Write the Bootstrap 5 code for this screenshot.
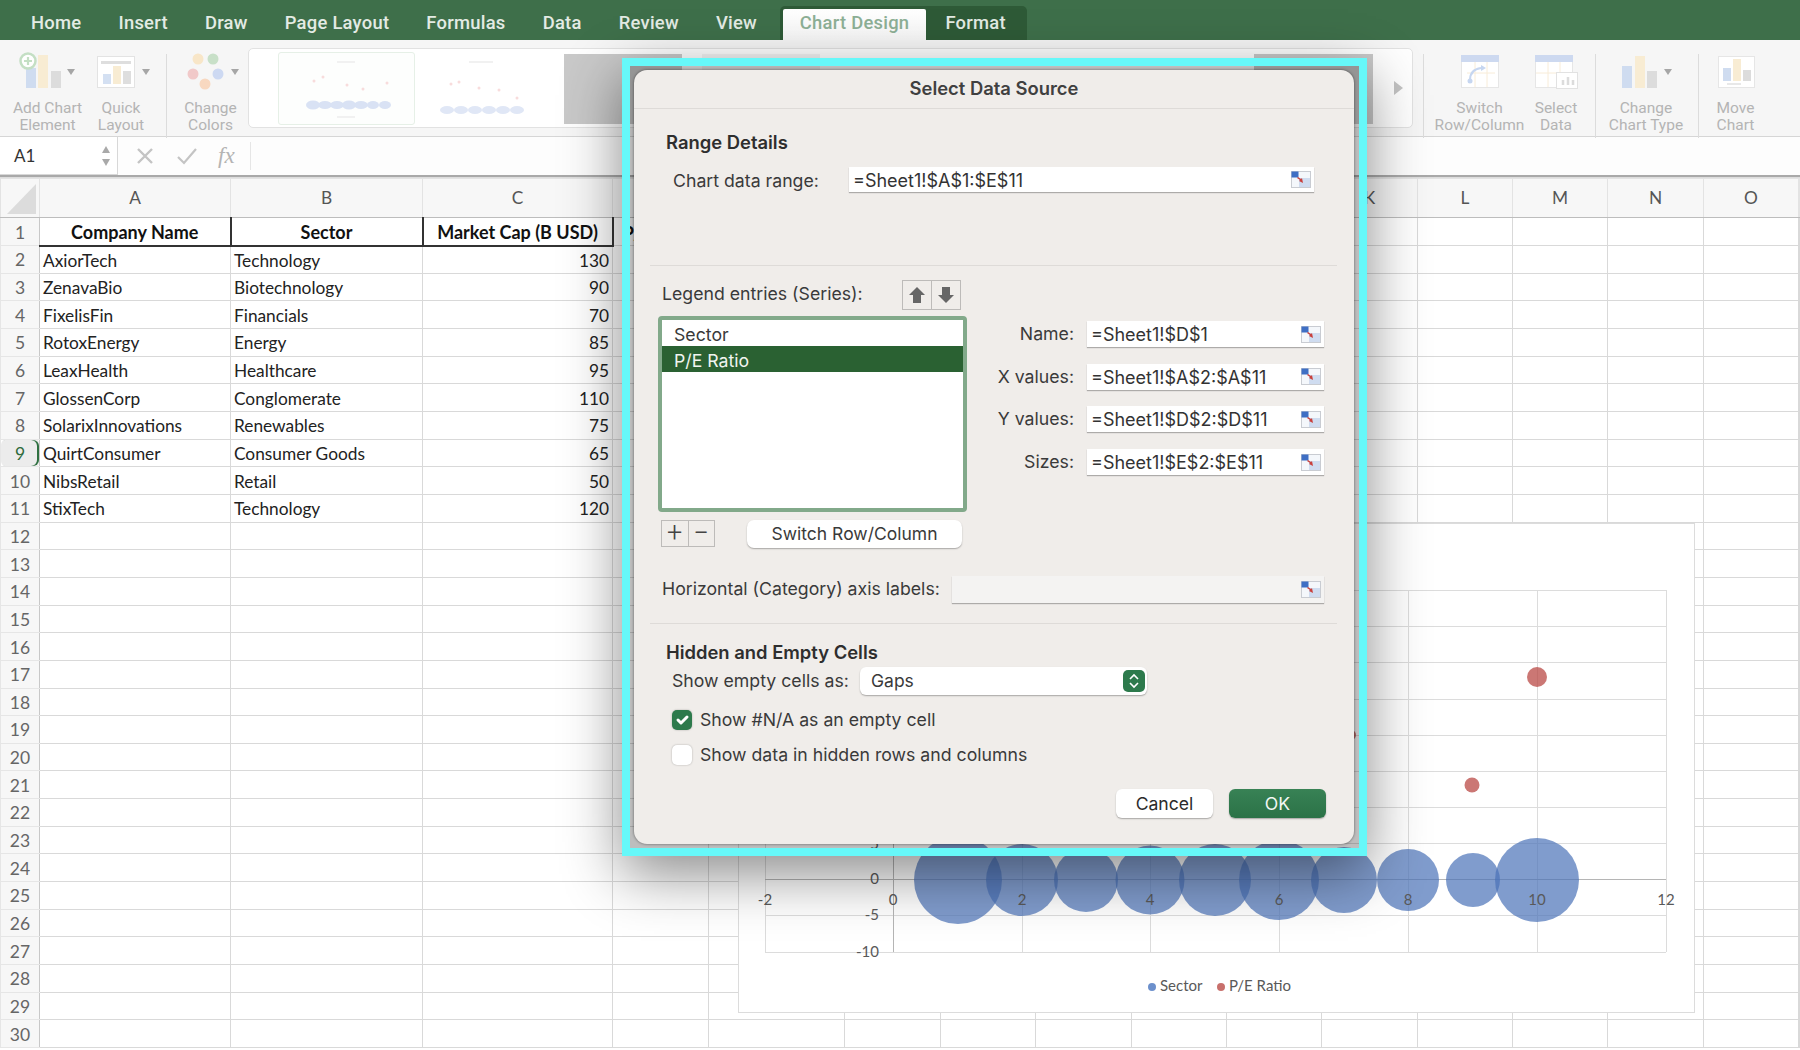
<!DOCTYPE html>
<html lang="en">
<head>
<meta charset="utf-8">
<title>Select Data Source</title>
<link href="https://cdn.jsdelivr.net/npm/bootstrap@5.3.0/dist/css/bootstrap.min.css" rel="stylesheet">
<style>
html,body{margin:0;height:1050px;width:1800px;overflow:hidden;background:#fff}
body{font-family:Inter,"Liberation Sans",sans-serif;position:relative}
.tabs{height:40px;background:#3e6f4a;padding-left:31px;gap:37.1px;align-items:flex-end}
.tabs .nav-link{padding:0;height:36px;line-height:37px;color:#e3ebe4;font-size:18.4px;font-weight:500;font-family:Roboto,sans-serif;letter-spacing:.25px}
.ctx{margin-left:-14px;background:#2e5a37;border-radius:5px 5px 0 0;height:34.5px;padding-left:3px;padding-right:2px;align-items:flex-end}
.ctx .nav-link{height:31px;line-height:28px;padding:0}
.ctx .active-tab{background:linear-gradient(#fff,#f7f7f7);color:#8db096;width:143px;text-align:center;border-radius:2px 2px 0 0}
.ctx .fmt{width:99px;text-align:center}
.ribbon{height:97px;background:#f6f6f6;border-bottom:1px solid #d6d6d6;padding:12px 0 0 13px;align-items:flex-start;color:#b4b4b4;font-family:Roboto,sans-serif;font-size:15.5px;line-height:17px}
.rb-item{display:flex;flex-direction:column;align-items:center;text-align:center;white-space:nowrap;flex:none}
.rb-item svg{display:block;overflow:visible;margin-bottom:10px}
.rb-sep{width:1px;height:84px;background:#dcdcdc;flex:none;margin-top:2px}
.gallery{width:1165px;height:80px;margin:-4px 0 0 11px;flex:none;background:#fff;border:1px solid #e2e2e2;border-radius:5px;padding:3px 0 0 29px;gap:0;position:relative}
.thumb{flex:none;height:73px}
.thumb1{width:137px;border:1px solid #e6f0e7;border-radius:3px;margin-right:12px;background:#fdfefd}
.thumb2{width:118px;margin-right:19px}
.thumb3{width:118px;height:70px;background:#c9c9c9;margin:2px 20px 0 0}
.thumb4{width:118px;height:70px;background:#f3f3f3;margin:2px 0 0 0}
.thumb5{width:119px;height:70px;background:#c9c9c9;margin:2px 0 0 auto}
.gal-arrow{width:39px;text-align:right;padding-right:9px;flex:none;align-self:center;margin-top:-3px}
.fbar{height:38px;background:#fdfdfd;align-items:stretch}
.namebox{width:118px;background:#fff;border:1px solid #d8d8d8;border-left:0;border-top:0;font-family:Lato,sans-serif;font-size:17px;color:#333;padding:0 6px 0 14px;justify-content:space-between;align-items:center}
.fx-icons{gap:0;align-items:center;color:#bdbdbd;width:132px;border-right:0}
.fx-sep{width:1px;height:28px;background:#e6e6e6;margin-top:5px}
.sheet-top{height:3px;border-top:2px solid #a9a9a9;border-bottom:1px solid #ddd;background:#f2f2f2}
table.sheet{table-layout:fixed;width:1800px;margin:0;border-collapse:collapse;font-family:Lato,sans-serif;font-size:17.3px;color:#222;--bs-table-bg:transparent;--bs-table-border-color:#d9d9d9}
.sheet th,.sheet td{padding:2px 3px 0;height:27.67px;line-height:24px;vertical-align:middle;border:1px solid #d9d9d9;overflow:hidden;white-space:nowrap;box-shadow:none;font-weight:400}
.sheet thead th{height:39px;padding:0;background:#f7f7f7;color:#555;text-align:center;border-color:#e3e3e3;border-bottom-color:#bdbdbd}
.sheet tbody th{background:#f7f7f7;color:#666;text-align:center;padding:2px 0 0;border-color:#e6e6e6;border-right-color:#c8c8c8;font-size:17.5px}
.sheet .hd td{height:28px;text-align:center;border-bottom:2px solid #333;border-right:2px solid #333;color:#111;font-weight:700;font-size:18px}
.sheet .hd td.blank{border:1px solid #d9d9d9}
.sheet .num{text-align:right;padding-right:3px}
.sheet tbody th.sel{background:#ececec;color:#2e6b3c;box-shadow:inset -2px 0 0 #2e7040}
.chart{position:absolute;left:738px;top:523px;width:957px;height:490px;display:block}
.chart text{font-family:Lato,sans-serif;font-size:15px;fill:#595959}
.window{position:absolute;left:622px;top:58px;width:745px;height:798px;border:8px solid #66f8f9;background:rgba(0,0,0,.26);background-clip:padding-box;box-shadow:0 18px 55px rgba(0,0,0,.46);padding:4px 5px 4px 4px}
.dlg{height:774px;width:720px;background:#f0edea;border-radius:13px;box-shadow:0 0 3px rgba(0,0,0,.5);color:#3a3a3a;font-size:17.7px;line-height:22px}
.dlg-title{height:39px;line-height:37px;text-align:center;font-weight:600;font-size:18.4px;border-bottom:1px solid #dedbd8;color:#404040}
.sec{font-weight:600;color:#2e2e2e;height:22px;margin-left:32px;font-size:18.4px}
.rule{height:1px;background:#dedbd8;margin:0 17px 0 16px}
.fld{background:#fff;border:0;border-radius:0;box-shadow:0 1px 1px rgba(0,0,0,.28);padding:2px 4px 0;height:26px;line-height:24px;font-size:18px;color:#333;justify-content:space-between;align-items:center;min-height:0}
.fld svg{flex:none;margin:-2px -1px 0 0}
.lbl-r{width:100%;text-align:right;padding-right:13px}
.rows{gap:16.7px}
.arrows{margin-left:auto}
.sqbtn{--bs-btn-padding-x:0;--bs-btn-padding-y:0;--bs-btn-border-color:#bdbbb9;--bs-btn-bg:transparent;--bs-btn-border-radius:0;width:30px;height:30px;display:flex;align-items:center;justify-content:center;color:#555}
.lst{width:309px;height:196px;border:4px solid #82a98a;border-radius:4px;background:#fff;padding:0}
.lst .list-group-item{border:0;border-radius:0;padding:2px 0 0 12px;height:26px;line-height:25px;background:transparent;color:#3a3a3a;margin-bottom:1px}
.lst .list-group-item.active{background:#2a6132;color:#f0f4f0}
.pm{width:27.5px;height:27px;font-size:27px;line-height:1;font-weight:300;color:#444;font-family:Roboto,sans-serif}
.sw{width:215px;height:28px;margin-left:32px;padding:0;background:#fff;border:0;border-radius:7px;box-shadow:0 1px 1.5px rgba(0,0,0,.3);color:#3a3a3a;font-size:17.5px;line-height:26px}
.sel{width:287px;height:28px;margin-left:12px;background:#fff none;border:0;border-radius:6px;box-shadow:0 1px 1.5px rgba(0,0,0,.3);padding:0 2px 0 11px;color:#3a3a3a;font-size:17.5px;line-height:26px;justify-content:space-between;align-items:center}
.chk{height:20px;margin:0 0 0 38px;padding:0;display:flex;align-items:center;min-height:0}
.chk .form-check-input{width:20px;height:20px;margin:0 8px 0 0;float:none;flex:none;border:0;border-radius:5px;box-shadow:0 0 2px rgba(0,0,0,.3);--bs-form-check-bg:#fff}
.chk .form-check-input:checked{background-color:#2d7a4c;border:0}
.chk .form-check-label{opacity:1;color:#3a3a3a}
.act{width:97px;height:29px;padding:0;border:0;border-radius:6px;font-size:17.6px;line-height:28px}
.act-c{background:#fff;color:#2b2b2b;box-shadow:0 1px 1.5px rgba(0,0,0,.3)}
.act-o{background:linear-gradient(#388255,#2b7247);color:#f3f7f3;box-shadow:0 1px 1.5px rgba(0,0,0,.3)}
</style>
</head>
<body>
<svg width="0" height="0" class="d-block position-absolute"><defs>
<symbol id="rng" viewBox="0 0 20 17">
<rect x=".5" y=".5" width="19" height="16" fill="#f4f7fb" stroke="#c9ccd2"/>
<rect x=".5" y=".5" width="7" height="6" fill="#3f6fc4"/>
<rect x="8" y="7" width="11" height="9" fill="#cfdcf0"/>
<path d="M7 6l3 2 1-1 1 5-4-2 1-1-3-2z" fill="#c9403c"/>
</symbol>
<symbol id="caret" viewBox="0 0 8 6"><path d="M0 0h8l-4 6z" fill="#a6a6a6"/></symbol>
</defs></svg>

<nav class="nav tabs">
  <a class="nav-link" href="#">Home</a><a class="nav-link" href="#">Insert</a><a class="nav-link" href="#">Draw</a><a class="nav-link" href="#">Page Layout</a><a class="nav-link" href="#">Formulas</a><a class="nav-link" href="#">Data</a><a class="nav-link" href="#">Review</a><a class="nav-link" href="#">View</a>
  <div class="d-flex ctx"><a class="nav-link active-tab" href="#">Chart Design</a><a class="nav-link fmt" href="#">Format</a></div>
</nav>

<div class="d-flex ribbon">
  <div class="rb-item" style="width:69px"><svg width="69" height="38" viewBox="0 0 69 38"><rect x="13" y="16" width="10" height="20" fill="#cfdcf0"/><rect x="25" y="3" width="10" height="33" fill="#f8ecd3"/><rect x="38" y="19" width="10" height="17" fill="#dcdcdc"/><circle cx="15" cy="9" r="7.5" fill="#fff" stroke="#c4dfc4" stroke-width="2.5"/><path d="M15 5v8M11 9h8" stroke="#c4dfc4" stroke-width="2.2"/><use href="#caret" x="54" y="17" width="8" height="6"/></svg>Add Chart<br>Element</div>
  <div class="rb-item ms-3" style="width:46px"><svg width="46" height="38" viewBox="0 0 46 38"><rect x="-.5" y="4.5" width="37" height="31" fill="#fff" stroke="#e3e3e3"/><rect x="3" y="9" width="30" height="3" fill="#dedede"/><rect x="5" y="22" width="8" height="10" fill="#d4e0f2"/><rect x="15" y="14" width="8" height="18" fill="#f8ecd3"/><rect x="25" y="19" width="8" height="13" fill="#dedede"/><use href="#caret" x="44" y="17" width="8" height="6"/></svg>Quick<br>Layout</div>
  <div class="rb-sep" style="margin-left:22px"></div>
  <div class="rb-item" style="width:53px;margin-left:17px"><svg width="53" height="38" viewBox="0 0 53 38"><circle cx="14" cy="7" r="5.5" fill="#f8e6c8"/><circle cx="29" cy="7" r="5.5" fill="#c8e0c8"/><circle cx="9" cy="22" r="5.5" fill="#f1c9c9"/><circle cx="34" cy="22" r="5.5" fill="#cdd9f2"/><circle cx="21" cy="32" r="5.5" fill="#f8d8c0"/><use href="#caret" x="47" y="17" width="8" height="6"/></svg>Change<br>Colors</div>
  <div class="d-flex gallery">
    <div class="thumb thumb1"><svg width="135" height="71" viewBox="0 0 135 71"><g fill="#f8dcdc"><circle cx="35" cy="28" r="1.5"/><circle cx="44" cy="24" r="1.5"/><circle cx="68" cy="32" r="1.5"/><circle cx="84" cy="36" r="1.5"/><circle cx="108" cy="30" r="1.5"/></g><g fill="#d9e2f4"><ellipse cx="34" cy="52" rx="7" ry="4.5"/><ellipse cx="46" cy="52" rx="7" ry="4"/><ellipse cx="58" cy="52" rx="7" ry="4"/><ellipse cx="70" cy="52" rx="7" ry="4.5"/><ellipse cx="82" cy="52" rx="7" ry="4"/><ellipse cx="94" cy="52" rx="6" ry="4"/><ellipse cx="106" cy="52" rx="6" ry="4"/></g><rect x="58" y="8" width="18" height="2" fill="#f1f1f1"/><rect x="58" y="63" width="18" height="2" fill="#f1f1f1"/></svg></div>
    <div class="thumb thumb2"><svg width="118" height="73" viewBox="0 0 118 73"><g fill="#f8dcdc"><circle cx="24" cy="32" r="1.5"/><circle cx="32" cy="30" r="1.5"/><circle cx="52" cy="36" r="1.5"/><circle cx="72" cy="38" r="1.5"/><circle cx="90" cy="46" r="1.5"/></g><g fill="#e0e7f6"><ellipse cx="20" cy="58" rx="7" ry="4"/><ellipse cx="34" cy="58" rx="7" ry="4"/><ellipse cx="48" cy="58" rx="7" ry="4"/><ellipse cx="62" cy="58" rx="7" ry="4"/><ellipse cx="76" cy="58" rx="7" ry="4"/><ellipse cx="90" cy="58" rx="7" ry="4"/></g><rect x="42" y="9" width="24" height="2" fill="#f1f1f1"/></svg></div>
    <div class="thumb thumb3"></div>
    <div class="thumb thumb4"></div>
    <div class="thumb thumb5"></div>
    <div class="gal-arrow"><svg width="9" height="14" viewBox="0 0 9 14"><path d="M0 0l9 7-9 7z" fill="#c4c4c4"/></svg></div>
  </div>
  <div class="rb-sep" style="margin-left:10px"></div>
  <div class="rb-item" style="width:85px;margin-left:13px"><svg width="85" height="38" viewBox="0 0 85 38"><rect x="24.5" y="3.5" width="37" height="32" fill="#fff" stroke="#e6e6e6"/><rect x="24" y="3" width="38" height="7" fill="#cdd9f0"/><path d="M30 21h28M38 10v25M50 10v25" stroke="#f8ecd8"/><path d="M33 28c0-7 4-11 11-12" fill="none" stroke="#c6d6f0" stroke-width="2"/><circle cx="33" cy="29" r="2.5" fill="#c6d6f0"/><path d="M44 13l5 3-5 3z" fill="#c6d6f0"/></svg>Switch<br>Row/Column</div>
  <div class="rb-item" style="width:52px;margin-left:8px"><svg width="52" height="38" viewBox="0 0 52 38"><rect x="5.5" y="3.5" width="37" height="32" fill="#fff" stroke="#e6e6e6"/><rect x="5" y="3" width="38" height="7" fill="#cdd9f0"/><path d="M6 21h36M18 10v25M30 10v25" stroke="#f8ecd8"/><rect x="26.5" y="20.5" width="21" height="16" fill="#fff" stroke="#e2e2e2"/><path d="M33 33v-5M38 33v-8M43 33v-5" stroke="#dcdcdc" stroke-width="2.5"/></svg>Select<br>Data</div>
  <div class="rb-sep" style="margin-left:13px"></div>
  <div class="rb-item" style="width:76px;margin-left:12px"><svg width="76" height="38" viewBox="0 0 76 38"><rect x="14" y="14" width="10" height="22" fill="#cfdcf0"/><rect x="27" y="4" width="10" height="32" fill="#f8ecd3"/><rect x="39" y="19" width="10" height="17" fill="#dcdcdc"/><use href="#caret" x="56" y="17" width="8" height="6"/></svg>Change<br>Chart Type</div>
  <div class="rb-sep" style="margin-left:14px"></div>
  <div class="rb-item" style="width:41px;margin-left:16px"><svg width="41" height="38" viewBox="0 0 41 38"><rect x="3.5" y="4.5" width="36" height="31" fill="#fff" stroke="#e6e6e6"/><rect x="8" y="16" width="8" height="13" fill="#cfdcf0"/><rect x="18" y="7" width="8" height="22" fill="#f8ecd3"/><rect x="28" y="18" width="8" height="11" fill="#dcdcdc"/><rect x="12" y="31" width="14" height="2" fill="#e8e8e8"/></svg>Move<br>Chart</div>
</div>

<div class="d-flex fbar">
  <div class="d-flex namebox"><span>A1</span><svg width="10" height="22" viewBox="0 0 10 22"><path d="M5 1l4 7H1z" fill="#a9a9a9"/><path d="M5 21l4-7H1z" fill="#a9a9a9"/></svg></div>
  <div class="d-flex fx-icons">
    <svg class="ms-3" width="22" height="20" viewBox="0 0 22 20"><path d="M4 3l14 14M18 3L4 17" stroke="#c4c4c4" stroke-width="2.4" fill="none"/></svg>
    <svg style="margin-left:19px" width="24" height="20" viewBox="0 0 24 20"><path d="M3 11l6 6L21 3" stroke="#c4c4c4" stroke-width="2.2" fill="none"/></svg>
    <span style="margin-left:19px;font:italic 23px 'Liberation Serif',serif;color:#b4b4b4">fx</span>
  </div>
  <div class="fx-sep"></div>
</div>
<div class="sheet-top"></div>

<table class="table sheet" id="sheet">
  <colgroup><col style="width:39px"><col style="width:191px"><col style="width:192px"><col style="width:190px"><col style="width:96px"><col style="width:136px"><col style="width:96px"><col style="width:95px"><col style="width:96px"><col style="width:95px"><col style="width:95px"><col style="width:96px"><col style="width:95px"><col style="width:95px"><col style="width:96px"><col style="width:95px"><col></colgroup>
  <thead><tr><th><svg class="d-block" width="39" height="38" viewBox="0 0 39 38"><path d="M35 5v30H6z" fill="#dcdcdc"/></svg></th><th>A</th><th>B</th><th>C</th><th>D</th><th>E</th><th>F</th><th>G</th><th>H</th><th>I</th><th>J</th><th>K</th><th>L</th><th>M</th><th>N</th><th>O</th><th></th></tr></thead>
  <tbody id="tb"></tbody>
</table>

<svg class="chart" viewBox="738 523 957 490">
  <rect x="738.5" y="523.5" width="956" height="489" fill="#fff" stroke="#dcdcdc"/>
  <g stroke="#dcdcdc" fill="none">
    <path d="M765 590.5H1666M765 626.5H1666M765 662.5H1666M765 699.5H1666M765 735.5H1666M765 771.5H1666M765 807.5H1666M765 843.5H1666M765 915.5H1666M765 952.5H1666"/>
    <path d="M765.5 590V952M1022.5 590V952M1150.5 590V952M1279.5 590V952M1408.5 590V952M1537.5 590V952M1666.5 590V952"/>
  </g>
  <path d="M765 879.5H1666M893.5 590V952" stroke="#b5b5b5" fill="none"/>
  <g fill="#4a72b8" fill-opacity=".7">
    <circle cx="958" cy="880" r="44"/><circle cx="1022" cy="880" r="36"/><circle cx="1086" cy="880" r="32"/><circle cx="1150" cy="880" r="34.5"/><circle cx="1215" cy="880" r="36"/><circle cx="1279" cy="880" r="40"/><circle cx="1344" cy="880" r="33"/><circle cx="1408" cy="880" r="31"/><circle cx="1473" cy="880" r="27"/><circle cx="1537" cy="880" r="42"/>
  </g>
  <g fill="#b94a46" fill-opacity=".75"><circle cx="1537" cy="677" r="10"/><circle cx="1472" cy="785" r="7.5"/><circle cx="1351" cy="735" r="5"/></g>
  <g text-anchor="end"><text x="879" y="849">5</text><text x="879" y="884">0</text><text x="879" y="920">-5</text><text x="879" y="957">-10</text></g>
  <g text-anchor="middle"><text x="765" y="905">-2</text><text x="893" y="905">0</text><text x="1022" y="905">2</text><text x="1150" y="905">4</text><text x="1279" y="905">6</text><text x="1408" y="905">8</text><text x="1537" y="905">10</text><text x="1666" y="905">12</text></g>
  <circle cx="1152" cy="987" r="4" fill="#6c90cc"/><text x="1160" y="991">Sector</text>
  <circle cx="1221" cy="987" r="4" fill="#c8706c"/><text x="1229" y="991">P/E Ratio</text>
</svg>

<div class="window">
  <div class="dlg">
    <div class="dlg-title">Select Data Source</div>
    <div class="sec" style="margin-top:22px">Range Details</div>
    <div class="d-flex align-items-center" style="margin:14px 0 0 39px;height:25px">
      <div style="width:176px;padding-top:2px">Chart data range:</div>
      <div class="form-control d-flex fld" style="width:465px;height:25px"><span>=Sheet1!$A$1:$E$11</span><svg width="20" height="17"><use href="#rng"/></svg></div>
    </div>
    <div class="rule" style="margin-top:73px"></div>
    <div class="d-flex align-items-center" style="margin:14px 0 0 28px;height:30px;width:299px">
      <span style="margin-top:-2px">Legend entries (Series):</span>
      <div class="btn-group arrows" role="group">
        <button type="button" class="btn sqbtn" aria-label="Up"><svg width="18" height="18" viewBox="0 0 18 18"><path d="M9 1l8 8h-4v8H5V9H1z" fill="#666"/></svg></button>
        <button type="button" class="btn sqbtn" aria-label="Down"><svg width="18" height="18" viewBox="0 0 18 18"><path d="M9 17l8-8h-4V1H5v8H1z" fill="#666"/></svg></button>
      </div>
    </div>
    <div class="d-flex" style="margin:6px 0 0 24px">
      <div style="width:309px">
        <div class="list-group lst">
          <div class="list-group-item">Sector</div>
          <div class="list-group-item active">P/E Ratio</div>
        </div>
        <div class="d-flex" style="margin:8px 0 0 3px">
          <div class="btn-group" role="group">
            <button type="button" class="btn sqbtn pm">+</button>
            <button type="button" class="btn sqbtn pm">−</button>
          </div>
          <button type="button" class="btn sw">Switch Row/Column</button>
        </div>
      </div>
      <div class="d-flex flex-column rows" style="margin:5px 0 0 0;width:357px">
        <div class="d-flex align-items-center"><div class="lbl-r">Name:</div><div class="form-control d-flex fld flex-shrink-0" style="width:237px"><span>=Sheet1!$D$1</span><svg width="20" height="17"><use href="#rng"/></svg></div></div>
        <div class="d-flex align-items-center"><div class="lbl-r">X values:</div><div class="form-control d-flex fld flex-shrink-0" style="width:237px"><span>=Sheet1!$A$2:$A$11</span><svg width="20" height="17"><use href="#rng"/></svg></div></div>
        <div class="d-flex align-items-center"><div class="lbl-r">Y values:</div><div class="form-control d-flex fld flex-shrink-0" style="width:237px"><span>=Sheet1!$D$2:$D$11</span><svg width="20" height="17"><use href="#rng"/></svg></div></div>
        <div class="d-flex align-items-center"><div class="lbl-r">Sizes:</div><div class="form-control d-flex fld flex-shrink-0" style="width:237px"><span>=Sheet1!$E$2:$E$11</span><svg width="20" height="17"><use href="#rng"/></svg></div></div>
      </div>
    </div>
    <div class="d-flex align-items-center" style="margin:28px 0 0 28px;height:27px">
      <div class="text-nowrap flex-shrink-0" style="width:290px;margin-top:-2px">Horizontal (Category) axis labels:</div>
      <div class="form-control d-flex fld" style="width:372px;height:27px;background:#f4f3f2"><span></span><svg width="20" height="17"><use href="#rng"/></svg></div>
    </div>
    <div class="rule" style="margin-top:20px"></div>
    <div class="sec" style="margin-top:17px">Hidden and Empty Cells</div>
    <div class="d-flex align-items-center" style="margin:4px 0 0 38px;height:28px">
      <div class="text-nowrap flex-shrink-0" style="width:176px">Show empty cells as:</div>
      <div class="form-select d-flex sel flex-shrink-0" style="margin-left:12px"><span>Gaps</span><svg width="22" height="22" viewBox="0 0 22 22"><rect width="22" height="22" rx="5" fill="#2d7a4c"/><path d="M7 9l4-4 4 4M7 13l4 4 4-4" stroke="#fff" stroke-width="1.6" fill="none"/></svg></div>
    </div>
    <div class="form-check chk" style="margin-top:15px"><input class="form-check-input" type="checkbox" id="c1" checked><label class="form-check-label" for="c1">Show #N/A as an empty cell</label></div>
    <div class="form-check chk" style="margin-top:15px"><input class="form-check-input" type="checkbox" id="c2"><label class="form-check-label" for="c2">Show data in hidden rows and columns</label></div>
    <div class="d-flex justify-content-end gap-3" style="margin:24px 28px 0 0">
      <button type="button" class="btn act act-c">Cancel</button>
      <button type="button" class="btn act act-o">OK</button>
    </div>
  </div>
</div>

<script src="https://cdn.jsdelivr.net/npm/bootstrap@5.3.0/dist/js/bootstrap.bundle.min.js"></script>
<script>
const rows=[["AxiorTech","Technology",130],["ZenavaBio","Biotechnology",90],["FixelisFin","Financials",70],["RotoxEnergy","Energy",85],["LeaxHealth","Healthcare",95],["GlossenCorp","Conglomerate",110],["SolarixInnovations","Renewables",75],["QuirtConsumer","Consumer Goods",65],["NibsRetail","Retail",50],["StixTech","Technology",120]];
let h='<tr class="hd"><th>1</th><td>Company Name</td><td>Sector</td><td>Market Cap (B USD)</td><td class="blank">P/E Ratio</td>'+'<td class="blank"></td>'.repeat(12)+'</tr>';
for(let i=2;i<=30;i++){
  const r=rows[i-2];
  h+='<tr><th'+(i==9?' class="sel"':'')+'>'+i+'</th>';
  h+=r?'<td>'+r[0]+'</td><td>'+r[1]+'</td><td class="num">'+r[2]+'</td>':'<td></td><td></td><td></td>';
  h+='<td></td>'.repeat(13)+'</tr>';
}
document.getElementById('tb').innerHTML=h;
</script>
</body>
</html>
